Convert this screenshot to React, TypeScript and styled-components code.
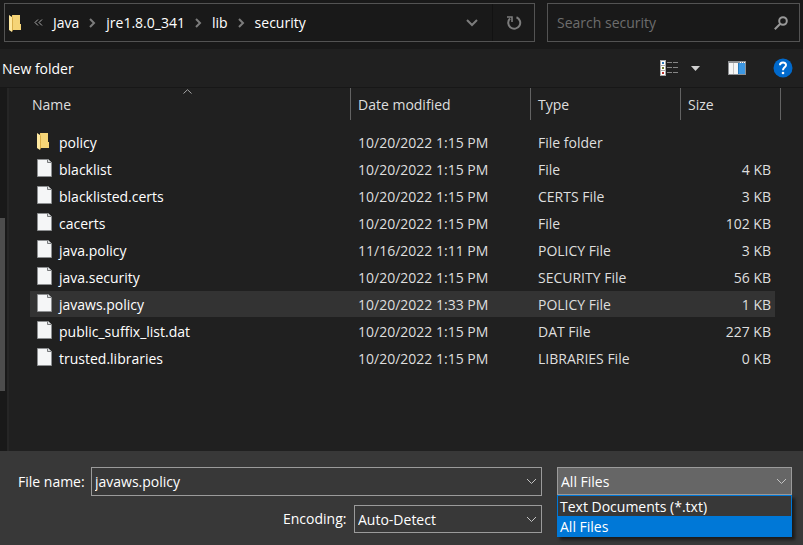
import React, { useState } from "react";
import styled, { createGlobalStyle } from "styled-components";

const GlobalStyle = createGlobalStyle`
  *, *::before, *::after { box-sizing: border-box; }
  body { margin: 0; background: #202020; }
  body, button, input, select {
    font-family: "Open Sans", "Noto Sans", sans-serif;
    font-size: 14px;
    line-height: 20px;
    color: #fff;
  }
  svg { display: block; flex: none; }
`;

const Dialog = styled.div`
  display: flex;
  flex-direction: column;
  min-height: 100vh;
`;

const AddressBar = styled.div`
  display: flex;
  gap: 12px;
  padding: 3px 3px 7px 4px;
  background: #191919;
`;

const AddressBox = styled.nav`
  display: flex;
  flex: 1;
  align-items: stretch;
  height: 39px;
  border: 1px solid #535353;
  padding-left: 4px;
`;

const Crumbs = styled.div`
  display: flex;
  flex: 1;
  align-items: center;
  gap: 10px;
`;

const Crumb = styled.a`
  color: #fff;
  text-decoration: none;
`;

const IconButton = styled.button<{ $width: number; $divided?: boolean }>`
  display: flex;
  align-items: center;
  justify-content: center;
  width: ${(p) => p.$width}px;
  padding: 0;
  border: 0;
  border-left: ${(p) => (p.$divided ? "1px solid #121212" : "0")};
  background: none;
`;

const SearchBox = styled.label`
  display: flex;
  align-items: center;
  width: 253px;
  height: 39px;
  padding: 0 11px 0 9px;
  border: 1px solid #535353;
`;

const SearchInput = styled.input`
  flex: 1;
  min-width: 0;
  padding: 0;
  border: 0;
  outline: 0;
  background: none;
  &::placeholder { color: #6d6d6d; opacity: 1; }
`;

const Toolbar = styled.div`
  display: flex;
  align-items: center;
  height: 39px;
  padding: 0 0 0 2px;
  border-bottom: 1px solid #171717;
  background: #202020;
`;

const TextButton = styled.button`
  margin-right: auto;
  padding: 1px 0 0;
  border: 0;
  background: none;
`;

const Body = styled.div`
  display: flex;
  flex: 1;
`;

const NavEdge = styled.div`
  display: flex;
  flex-direction: column;
  width: 9px;
  padding-top: 130px;
  background: #191919;
  border-right: 2px solid #262626;
`;

const ScrollThumb = styled.div`
  width: 5px;
  height: 173px;
  background: #4d4d4d;
`;

const ListPane = styled.main`
  flex: 1;
  padding: 0 22px 0 21px;
  background: #202020;
`;

const Table = styled.table`
  width: 100%;
  table-layout: fixed;
  border-spacing: 0;
  color: #dedede;
`;

const HeadCell = styled.th<{ $width?: number }>`
  position: relative;
  width: ${(p) => (p.$width ? `${p.$width}px` : "auto")};
  height: 32px;
  padding: 2px 0 0 7px;
  border-right: 1px solid #636363;
  font-weight: 400;
  text-align: left;
  &:first-child { padding-left: 2px; }
`;

const SortMark = styled.svg`
  position: absolute;
  top: 1px;
  left: 0;
  right: 6px;
  margin: 0 auto;
`;

const Rows = styled.tbody`
  &::before { content: ""; display: block; height: 9px; }
`;

const Row = styled.tr<{ $selected: boolean }>`
  & > td { background-color: ${(p) => (p.$selected ? "#333333" : "transparent")}; }
`;

const Cell = styled.td`
  height: 27px;
  padding: 2px 0 0 7px;
  border-bottom: 1px solid transparent;
  background-clip: padding-box;
  white-space: nowrap;
`;

const NameCell = styled(Cell)`
  color: #fff;
`;

const SizeCell = styled(Cell)`
  padding-right: 4px;
  border-right: 6px solid transparent;
  text-align: right;
`;

const FileLabel = styled.span`
  display: flex;
  align-items: flex-start;
  gap: 7px;
  line-height: 22px;
`;

const Footer = styled.form`
  display: grid;
  grid-template-columns: 1fr 235px;
  column-gap: 15px;
  align-items: start;
  padding: 16px 11px 12px 18px;
  background: #383838;
`;

const Fields = styled.div`
  display: flex;
  flex-direction: column;
  gap: 9px;
`;

const FieldRow = styled.div`
  display: flex;
  align-items: center;
  justify-content: flex-end;
`;

const FieldLabel = styled.label<{ $width: number }>`
  width: ${(p) => p.$width}px;
  white-space: nowrap;
`;

const Combo = styled.div<{ $width?: number; $open?: boolean; $height: number }>`
  position: relative;
  display: flex;
  align-items: center;
  flex: ${(p) => (p.$width ? `0 0 ${p.$width}px` : "1")};
  height: ${(p) => p.$height}px;
  padding: 0 4px 0 3px;
  border: 1px solid #9b9b9b;
  background: ${(p) => (p.$open ? "#666666" : "#383838")};
`;

const ComboInput = styled.input`
  flex: 1;
  min-width: 0;
  padding: 0;
  border: 0;
  outline: 0;
  background: none;
`;

const ComboSelect = styled.select`
  flex: 1;
  min-width: 0;
  padding: 1px 0 0;
  border: 0;
  outline: 0;
  appearance: none;
  background: none;
`;

const Popup = styled.ul`
  position: absolute;
  top: 27px;
  left: -1px;
  right: -1px;
  margin: 0;
  padding: 0;
  border: 1px solid #0078d7;
  list-style: none;
  background: #383838;
  box-shadow: 3px 3px 3px #1c1c1c;
`;

const PopupItem = styled.li<{ $active: boolean }>`
  height: 20px;
  padding-left: 2px;
  line-height: 21px;
  background: ${(p) => (p.$active ? "#0078d7" : "transparent")};
`;

const FolderIcon = () => (
  <svg width="15" height="18" viewBox="0 0 15 18" aria-hidden="true">
    <path d="M0 1H11V10L12 11V16H3V1Z" fill="#eec764" />
    <path d="M4 1H11V10H12V16H4Z" fill="#f5d477" />
    <path d="M0 1L3 3V18L0 16Z" fill="#ffe9a0" />
    <path d="M3 3L4 4V16L3 18Z" fill="#d9ad48" />
  </svg>
);

const DocumentIcon = () => (
  <svg width="15" height="18" viewBox="0 0 15 18" aria-hidden="true">
    <path d="M.5 .5H11.5L14.5 3.5V17.5H.5Z" fill="#f5f6f7" stroke="#8d8f91" />
    <path d="M10.5 .5V3.5H14.5" fill="#d9dbdd" stroke="#77797b" />
  </svg>
);

const Caret = () => (
  <svg width="7" height="10" viewBox="0 0 7 10" fill="none" stroke="#7c7c7c" strokeWidth="2" aria-hidden="true">
    <path d="M1 1L5 5L1 9" />
  </svg>
);

const ComboArrow = () => (
  <svg width="11" height="7" viewBox="0 0 11 7" fill="none" stroke="#c4c4c4" aria-hidden="true">
    <path d="M1 1L5.5 5.5L10 1" />
  </svg>
);

const files = [
  ["policy", "10/20/2022 1:15 PM", "File folder", ""],
  ["blacklist", "10/20/2022 1:15 PM", "File", "4 KB"],
  ["blacklisted.certs", "10/20/2022 1:15 PM", "CERTS File", "3 KB"],
  ["cacerts", "10/20/2022 1:15 PM", "File", "102 KB"],
  ["java.policy", "11/16/2022 1:11 PM", "POLICY File", "3 KB"],
  ["java.security", "10/20/2022 1:15 PM", "SECURITY File", "56 KB"],
  ["javaws.policy", "10/20/2022 1:33 PM", "POLICY File", "1 KB"],
  ["public_suffix_list.dat", "10/20/2022 1:15 PM", "DAT File", "227 KB"],
  ["trusted.libraries", "10/20/2022 1:15 PM", "LIBRARIES File", "0 KB"],
];

const path = ["Java", "jre1.8.0_341", "lib", "security"];
const filters = ["Text Documents (*.txt)", "All Files"];

export default function App() {
  const [selected, setSelected] = useState("javaws.policy");
  const [filter, setFilter] = useState("All Files");

  return (
    <Dialog>
      <GlobalStyle />
      <AddressBar>
        <AddressBox aria-label="Address">
          <Crumbs>
            <FolderIcon />
            <svg width="9" height="7" viewBox="0 0 9 7" fill="none" stroke="#a8a8a8" aria-hidden="true">
              <path d="M4 .5L1 3.5L4 6.5M8 .5L5 3.5L8 6.5" />
            </svg>
            {path.map((part, i) => (
              <React.Fragment key={part}>
                {i > 0 && <Caret />}
                <Crumb href="#">{part}</Crumb>
              </React.Fragment>
            ))}
          </Crumbs>
          <IconButton type="button" $width={40} aria-label="Previous locations">
            <svg width="12" height="8" viewBox="0 0 12 8" fill="none" stroke="#7c7c7c" strokeWidth="2" aria-hidden="true">
              <path d="M1 1L6 6L11 1" />
            </svg>
          </IconButton>
          <IconButton type="button" $width={42} $divided aria-label="Refresh">
            <svg width="16" height="16" viewBox="0 0 16 16" fill="none" stroke="#7c7c7c" strokeWidth="2" aria-hidden="true">
              <path d="M10.5 2.2A6 6 0 1 1 4 3.5" />
              <path d="M1 2H6V7" strokeWidth="1.6" />
            </svg>
          </IconButton>
        </AddressBox>
        <SearchBox>
          <SearchInput type="search" placeholder="Search security" aria-label="Search security" />
          <svg width="14" height="14" viewBox="0 0 14 14" fill="none" stroke="#989898" strokeWidth="2" aria-hidden="true">
            <circle cx="9" cy="5" r="3.8" />
            <path d="M6.3 7.7L.8 13.2" />
          </svg>
        </SearchBox>
      </AddressBar>

      <Toolbar>
        <TextButton type="button">New folder</TextButton>
        <IconButton type="button" $width={20} aria-label="Change view">
          <svg width="18" height="16" viewBox="0 0 18 16" shapeRendering="crispEdges" aria-hidden="true">
            <path d="M0 0H6V16H0Z" fill="#a9a9a9" />
            <path d="M1 1H5V5H1ZM1 6H5V10H1ZM1 11H5V15H1Z" fill="#fff" />
            <path d="M2 2H4V4H2Z" fill="#2c78b8" />
            <path d="M2 7H4V9H2Z" fill="#6f7c2c" />
            <path d="M2 12H4V14H2Z" fill="#b8322c" />
            <path d="M7 2H12V3H7ZM13 2H18V3H13ZM7 7H12V8H7ZM13 7H18V8H13ZM7 12H12V13H7ZM13 12H18V13H13Z" fill="#858585" />
          </svg>
        </IconButton>
        <IconButton type="button" $width={32} aria-label="View options">
          <svg width="9" height="5" viewBox="0 0 9 5" aria-hidden="true">
            <path d="M0 0H9L4.5 5Z" fill="#d0d0d0" />
          </svg>
        </IconButton>
        <IconButton type="button" $width={52} aria-label="Preview pane">
          <svg width="18" height="14" viewBox="0 0 18 14" shapeRendering="crispEdges" aria-hidden="true">
            <path d="M0 0H18V14H0Z" fill="#8e9093" />
            <path d="M1 2H10V13H1Z" fill="#f6f6f6" />
            <path d="M5 2H6V13H5Z" fill="#c6c6c6" />
            <path d="M10 2H17V13H10Z" fill="#3d98e3" />
            <path d="M10 2H11V13H10Z" fill="#2477b9" />
            <path d="M12 1H13V2H12ZM14 1H15V2H14ZM16 1H17V2H16Z" fill="#fff" />
          </svg>
        </IconButton>
        <IconButton type="button" $width={40} aria-label="Help">
          <svg width="20" height="20" viewBox="0 0 20 20" aria-hidden="true">
            <circle cx="10" cy="10" r="9.5" fill="#0069cc" />
            <path d="M7 7.2C7 3.6 13 3.7 13 7C13 9.4 10 9.3 10 12.3" fill="none" stroke="#fff" strokeWidth="2" />
            <circle cx="10" cy="15" r="1.3" fill="#fff" />
          </svg>
        </IconButton>
      </Toolbar>

      <Body>
        <NavEdge>
          <ScrollThumb />
        </NavEdge>
        <ListPane>
          <Table>
            <thead>
              <tr>
                <HeadCell aria-sort="ascending">
                  Name
                  <SortMark width="9" height="5" viewBox="0 0 9 5" fill="none" stroke="#a6a6a6" aria-hidden="true">
                    <path d="M.5 4.5L4.5 .7L8.5 4.5" />
                  </SortMark>
                </HeadCell>
                <HeadCell $width={180}>Date modified</HeadCell>
                <HeadCell $width={150}>Type</HeadCell>
                <HeadCell $width={100}>Size</HeadCell>
              </tr>
            </thead>
            <Rows>
              {files.map(([name, date, type, size]) => (
                <Row key={name} $selected={name === selected} onClick={() => setSelected(name)}>
                  <NameCell>
                    <FileLabel>
                      {type === "File folder" ? <FolderIcon /> : <DocumentIcon />}
                      {name}
                    </FileLabel>
                  </NameCell>
                  <Cell>{date}</Cell>
                  <Cell>{type}</Cell>
                  <SizeCell>{size}</SizeCell>
                </Row>
              ))}
            </Rows>
          </Table>
        </ListPane>
      </Body>

      <Footer onSubmit={(e) => e.preventDefault()}>
        <Fields>
          <FieldRow>
            <FieldLabel htmlFor="file-name" $width={73}>File name:</FieldLabel>
            <Combo $height={29}>
              <ComboInput id="file-name" type="text" defaultValue="javaws.policy" />
              <ComboArrow />
            </Combo>
          </FieldRow>
          <FieldRow>
            <FieldLabel htmlFor="encoding" $width={71}>Encoding:</FieldLabel>
            <Combo $width={188} $height={28}>
              <ComboSelect id="encoding" defaultValue="Auto-Detect">
                <option>Auto-Detect</option>
              </ComboSelect>
              <ComboArrow />
            </Combo>
          </FieldRow>
        </Fields>
        <Combo $height={28} $open>
          <ComboSelect aria-label="File type" value={filter} onChange={(e) => setFilter(e.target.value)}>
            {filters.map((f) => (
              <option key={f}>{f}</option>
            ))}
          </ComboSelect>
          <ComboArrow />
          <Popup role="listbox" aria-label="File types">
            {filters.map((f) => (
              <PopupItem key={f} role="option" aria-selected={f === filter} $active={f === filter} onClick={() => setFilter(f)}>
                {f}
              </PopupItem>
            ))}
          </Popup>
        </Combo>
      </Footer>
    </Dialog>
  );
}
